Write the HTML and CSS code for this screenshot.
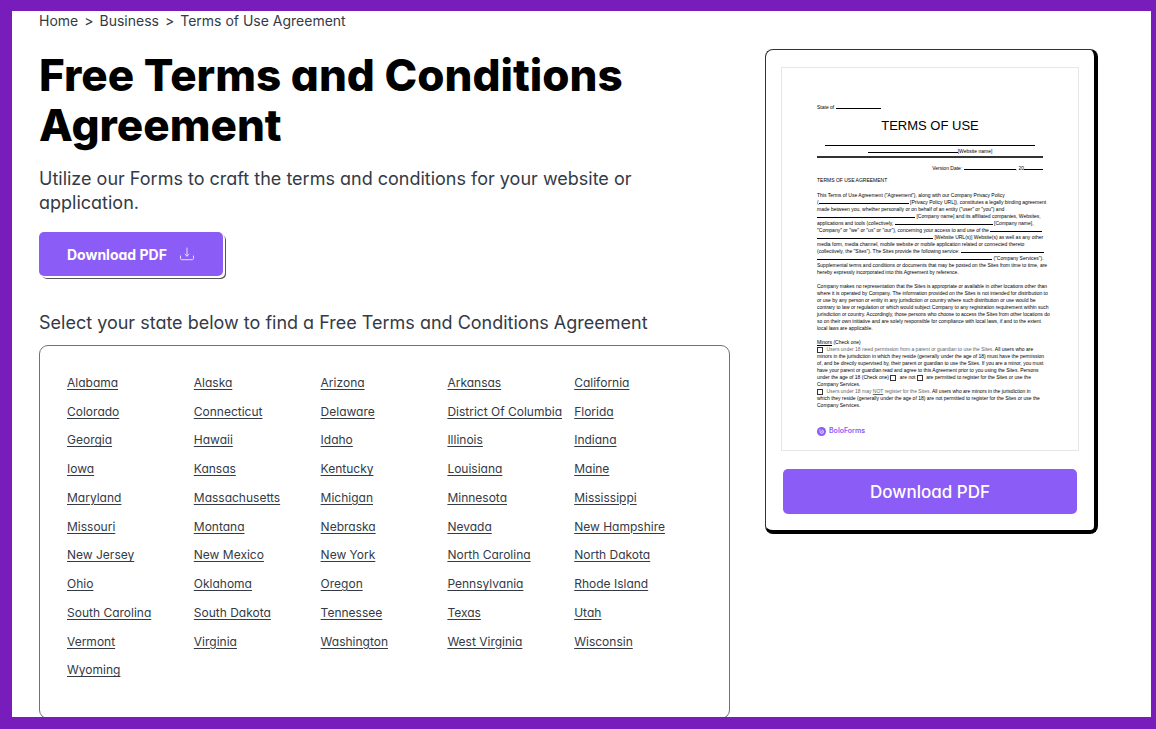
FILE: index.html
```html
<!DOCTYPE html>
<html lang="en">
<head>
    <meta charset="UTF-8">
    <meta name="viewport" content="width=device-width, initial-scale=1.0">
    <title>Free Terms and Conditions Agreement</title>
    <link rel="stylesheet" href="styles.css">
</head>
<body>
<div class="frame">
    <main class="page">
        <section class="content">
            <nav class="breadcrumb" aria-label="Breadcrumb">
                <a href="#">Home</a>
                <span>&gt;</span>
                <a href="#">Business</a>
                <span>&gt;</span>
                <a href="#">Terms of Use Agreement</a>
            </nav>

            <h1>Free Terms and Conditions Agreement</h1>
            <p class="intro">Utilize our Forms to craft the terms and conditions for your website or application.</p>

            <button type="button" class="btn btn-small">
                Download PDF
                <svg class="icon" viewBox="0 0 16 16" fill="none" stroke="currentColor" stroke-linecap="round" stroke-linejoin="round">
                    <path d="M8 2v8M6 8.300L8 10.200l2-1.900M1.500 10v2.500a1.200 1.200 0 0 0 1.200 1.200h10.600a1.200 1.200 0 0 0 1.200-1.200V10"/>
                </svg>
            </button>

            <h2>Select your state below to find a Free Terms and Conditions Agreement</h2>

            <div class="states">
                <a href="#">Alabama</a>
                <a href="#">Alaska</a>
                <a href="#">Arizona</a>
                <a href="#">Arkansas</a>
                <a href="#">California</a>
                <a href="#">Colorado</a>
                <a href="#">Connecticut</a>
                <a href="#">Delaware</a>
                <a href="#">District Of Columbia</a>
                <a href="#">Florida</a>
                <a href="#">Georgia</a>
                <a href="#">Hawaii</a>
                <a href="#">Idaho</a>
                <a href="#">Illinois</a>
                <a href="#">Indiana</a>
                <a href="#">Iowa</a>
                <a href="#">Kansas</a>
                <a href="#">Kentucky</a>
                <a href="#">Louisiana</a>
                <a href="#">Maine</a>
                <a href="#">Maryland</a>
                <a href="#">Massachusetts</a>
                <a href="#">Michigan</a>
                <a href="#">Minnesota</a>
                <a href="#">Mississippi</a>
                <a href="#">Missouri</a>
                <a href="#">Montana</a>
                <a href="#">Nebraska</a>
                <a href="#">Nevada</a>
                <a href="#">New Hampshire</a>
                <a href="#">New Jersey</a>
                <a href="#">New Mexico</a>
                <a href="#">New York</a>
                <a href="#">North Carolina</a>
                <a href="#">North Dakota</a>
                <a href="#">Ohio</a>
                <a href="#">Oklahoma</a>
                <a href="#">Oregon</a>
                <a href="#">Pennsylvania</a>
                <a href="#">Rhode Island</a>
                <a href="#">South Carolina</a>
                <a href="#">South Dakota</a>
                <a href="#">Tennessee</a>
                <a href="#">Texas</a>
                <a href="#">Utah</a>
                <a href="#">Vermont</a>
                <a href="#">Virginia</a>
                <a href="#">Washington</a>
                <a href="#">West Virginia</a>
                <a href="#">Wisconsin</a>
                <a href="#">Wyoming</a>
            </div>
        </section>

        <aside class="card">
            <article class="doc">
                <p class="doc-state">State of <span class="blank b-sm"></span></p>
                <h3>TERMS OF USE</h3>
                <div class="doc-name">
                    <span class="blank b-full"></span><br>
                    <span class="blank b-md"></span>[Website name]
                </div>
                <p class="doc-version">Version Date: <span class="blank b-date"></span>, 20<span class="blank b-xs"></span></p>
                <h4>TERMS OF USE AGREEMENT</h4>
                <p>
                    This Terms of Use Agreement ("Agreement"), along with our Company Privacy Policy<br>
                    (<span class="blank b-md"></span> [Privacy Policy URL]), constitutes a legally binding agreement<br>
                    made between you, whether personally or on behalf of an entity ("user" or "you") and<br>
                    <span class="blank b-lg"></span> [Company name] and its affiliated companies, Websites,<br>
                    applications and tools (collectively, <span class="blank b-lg"></span> [Company name],<br>
                    "Company" or "we" or "us" or "our"), concerning your access to and use of the <span class="blank b-date"></span><br>
                    <span class="blank b-xl"></span> [Website URL(s)] Website(s) as well as any other<br>
                    media form, media channel, mobile website or mobile application related or connected thereto<br>
                    (collectively, the "Sites"). The Sites provide the following service: <span class="blank b-service"></span><br>
                    <span class="blank b-wide"></span> ("Company Services").<br>
                    Supplemental terms and conditions or documents that may be posted on the Sites from time to time, are<br>
                    hereby expressly incorporated into this Agreement by reference.
                </p>
                <p>
                    Company makes no representation that the Sites is appropriate or available in other locations other than<br>
                    where it is operated by Company. The information provided on the Sites is not intended for distribution to<br>
                    or use by any person or entity in any jurisdiction or country where such distribution or use would be<br>
                    contrary to law or regulation or which would subject Company to any registration requirement within such<br>
                    jurisdiction or country. Accordingly, those persons who choose to access the Sites from other locations do<br>
                    so on their own initiative and are solely responsible for compliance with local laws, if and to the extent<br>
                    local laws are applicable.
                </p>
                <p>
                    <u>Minors</u> (Check one)<br>
                    <span class="box"></span> <span class="light">Users under 18 need permission from a parent or guardian to use the Sites.</span> All users who are<br>
                    minors in the jurisdiction in which they reside (generally under the age of 18) must have the permission<br>
                    of, and be directly supervised by, their parent or guardian to use the Sites. If you are a minor, you must<br>
                    have your parent or guardian read and agree to this Agreement prior to you using the Sites. Persons<br>
                    under the age of 18 (Check one) <span class="box"></span> are not <span class="box"></span> are permitted to register for the Sites or use the<br>
                    Company Services.<br>
                    <span class="box"></span> <span class="light">Users under 18 may <u>NOT</u> register for the Sites.</span> All users who are minors in the jurisdiction in<br>
                    which they reside (generally under the age of 18) are not permitted to register for the Sites or use the<br>
                    Company Services.
                </p>
                <footer class="brand">
                    <svg class="brand-icon" viewBox="0 0 18 18" fill="none">
                        <circle cx="9" cy="9" r="9" fill="#8b5cf6"/>
                        <path d="M6 4.500v5a3.500 3.500 0 1 0 3.500-3.500M8 9.500h3" stroke="#fff" stroke-width="1.500"/>
                    </svg>
                    BoloForms
                </footer>
            </article>
            <button type="button" class="btn btn-wide">Download PDF</button>
        </aside>
    </main>
</div>
</body>
</html>
```
FILE: styles.css
```css
* {
    box-sizing: border-box;
}
body {
    margin: 0;
    font-family: Inter, sans-serif;
    font-feature-settings: "cv11";
    color: #343a46;
    background-color: #fff;
}
.frame {
    height: 100vh;
    overflow: hidden;
    border: 12px solid #781cbc;
    border-top-width: 11px;
    border-right-width: 5px;
}
.page {
    display: grid;
    grid-template-columns: minmax(0, 691fr) minmax(0, 333fr);
    align-items: start;
    gap: 35px;
    padding: 0 53px 0 27px;
}
.breadcrumb {
    display: flex;
    gap: 6px;
    font-size: 14px;
    line-height: 20px;
}
.breadcrumb a {
    color: inherit;
    text-decoration: none;
}
h1 {
    margin: 19px 0 17px;
    color: #000;
    font-size: 44px;
    font-weight: 800;
    line-height: 50px;
}
.intro {
    max-width: 640px;
    margin: 0 0 17px;
    font-size: 18px;
    line-height: 24px;
}
.btn {
    border: none;
    border-radius: 5px;
    background-color: #8b5cf6;
    color: #fff;
    font-family: inherit;
    font-feature-settings: inherit;
    cursor: pointer;
}
.btn-small {
    display: flex;
    align-items: center;
    gap: 12px;
    height: 44px;
    padding: 0 28px;
    font-size: 14px;
    font-weight: 700;
    box-shadow: 2px 2px 0 #fff, 3px 3px 0 #555;
}
.icon {
    width: 16px;
    height: 16px;
    opacity: 0.8;
}
h2 {
    margin: 35px 0 10px;
    font-size: 18px;
    font-weight: 400;
    line-height: 24px;
}
.states {
    display: grid;
    grid-template-columns: repeat(5, 1fr);
    grid-auto-rows: 1fr;
    min-height: 374px;
    padding: 23px 28px 33px 27px;
    border: 1px solid #6b7280;
    border-radius: 9px;
}
.states a {
    color: inherit;
    font-size: 12px;
    line-height: 28px;
    white-space: nowrap;
    text-underline-offset: 2px;
}
.card {
    margin-top: 38px;
    padding: 17px 15px 16px;
    border: 1px solid #333;
    border-right: 4px solid #000;
    border-bottom: 4px solid #000;
    border-radius: 8px;
}
.btn-wide {
    display: block;
    width: calc(100% - 4px);
    height: 45px;
    margin: 18px auto 0;
    font-size: 17px;
    font-weight: 500;
}

/* document preview */
.doc {
    padding: 36px 35px 14px 35px;
    border: 1px solid #e5e7eb;
    color: #000;
    font: 5px/7px "Liberation Sans", Arial, sans-serif;
    white-space: nowrap;
}
.doc p {
    margin: 0 0 7px;
}
.doc h3 {
    margin: 8px 0;
    font-size: 13px;
    line-height: 14px;
    text-align: center;
    font-weight: 400;
}
.doc h4 {
    margin: 5px 0 8px;
    font-size: 5px;
    font-weight: 400;
}
.doc-name {
    padding-bottom: 1px;
    border-bottom: 2px solid #333;
    text-align: center;
}
.doc .doc-version {
    margin: 7px 0 0;
    text-align: right;
}
.blank {
    display: inline-block;
    border-bottom: 1px solid #000;
}
.b-xs { width: 19px; }
.b-sm { width: 45px; }
.b-date { width: 52px; }
.b-service { width: 83px; }
.b-md { width: 90px; }
.b-lg { width: 98px; }
.b-xl { width: 116px; }
.b-wide { width: 175px; }
.b-full { width: 210px; }
.box {
    display: inline-block;
    width: 6px;
    height: 6px;
    margin: -1px 2px -1px 0;
    border: 1px solid #333;
    vertical-align: middle;
}
.light {
    color: #666;
}
.brand {
    display: flex;
    align-items: center;
    gap: 3px;
    margin-top: 17px;
    color: #8b5cf6;
    font: 600 7px/10px Inter, sans-serif;
}
.brand-icon {
    width: 9px;
    height: 9px;
}
```
